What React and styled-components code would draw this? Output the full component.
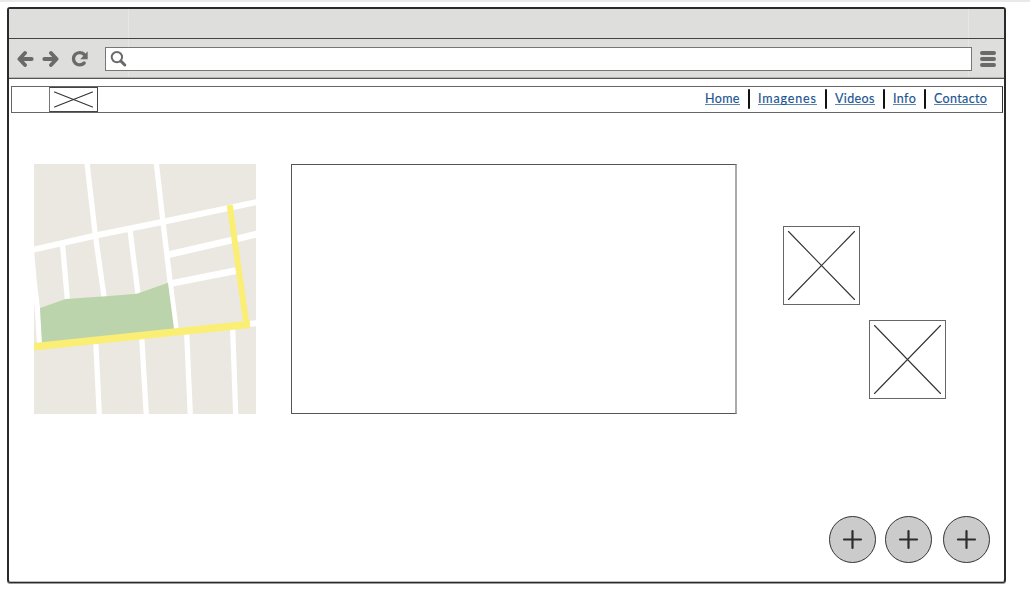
import React from "react";
import styled, { createGlobalStyle } from "styled-components";

const GlobalStyle = createGlobalStyle`
  * { box-sizing: border-box; }
  body { margin: 0; background: #fff; font-family: Lato, "Liberation Sans", sans-serif; }
  svg { display: block; }
`;

const Page = styled.div`
  height: 609px;
  padding: 5px 0 0 7px;
  border-top: 2px solid #e9e9e9;
  overflow: hidden;
`;

const BrowserWindow = styled.div`
  width: 999px;
  height: 576px;
  display: flex;
  flex-direction: column;
  border: 2px solid #2b2929;
  border-bottom-width: 1px;
  border-radius: 3px;
  box-shadow: 0 1px 0 #999, inset 0 -1px 0 #bbb;
`;

const TitleBar = styled.div`
  height: 30px;
  background: linear-gradient(#e6e6e5, #e6e6e5) 119px 0 / 1px 100% no-repeat,
    linear-gradient(#e6e6e5, #e6e6e5) 959px 0 / 1px 100% no-repeat, #dededc;
  border-bottom: 1px solid #444;
`;

const Toolbar = styled.div`
  height: 40px;
  display: flex;
  align-items: center;
  padding: 0 7px 0 8px;
  background: linear-gradient(#e6e6e5, #e6e6e5) 119px 0 / 1px 100% no-repeat,
    linear-gradient(#e6e6e5, #e6e6e5) 959px 0 / 1px 100% no-repeat, #dededc;
  border-bottom: 1px solid #555;
  box-shadow: inset 0 -1px 0 #b5b5b5;
`;

const AddressBar = styled.div`
  width: 867px;
  height: 24px;
  margin: 0 8px 0 13px;
  padding-left: 4px;
  display: flex;
  align-items: center;
  background: #fff;
  border: 1px solid #777;
`;

const NavBar = styled.header`
  height: 27px;
  margin: 7px 1px 0 2px;
  padding: 0 15px 0 37px;
  display: flex;
  align-items: center;
  justify-content: space-between;
  border: 1px solid #666;
  border-right-color: #333;
`;

const LogoBox = styled.div`
  width: 49px;
  height: 25px;
  border: 1px solid #444;
  border-left: 1px solid #777;
`;

const Links = styled.nav`
  display: flex;
  align-items: center;
  margin-bottom: 2px;
`;

const Link = styled.a`
  width: ${(p) => p.$width}px;
  height: 13px;
  color: #1a5490;
  font-size: 12.5px;
  line-height: 13px;
  letter-spacing: ${(p) => p.$spacing}px;
  white-space: nowrap;
  border-bottom: 1px solid #5a87b4;
  -webkit-text-stroke: 0.15px #1a5490;
`;

const Divider = styled.span`
  width: 2px;
  height: 20px;
  margin: 0 8px;
  border-radius: 1px;
  background: #111;
`;

const Content = styled.main`
  display: flex;
  align-items: flex-start;
  margin-top: 51px;
  padding-left: 25px;
`;

const Panel = styled.section`
  width: 446px;
  height: 250px;
  margin-left: 35px;
  border: 1px solid #555;
  border-right: 2px solid #aaa;
`;

const Gallery = styled.section`
  display: flex;
  flex-direction: column;
  gap: 15px;
  margin: 62px 0 0 46px;
`;

const Thumb = styled.div`
  width: 77px;
  height: 79px;
  margin-left: ${(p) => p.$indent}px;
  border: 1px solid #666;
`;

const Actions = styled.footer`
  display: flex;
  justify-content: flex-end;
  margin-top: auto;
  padding: 0 14px 19px 0;
`;

const RoundButton = styled.button`
  width: 47px;
  height: 47px;
  margin: 0 0 0 ${(p) => p.$gap}px;
  padding: 0;
  display: grid;
  place-items: center;
  background: #cbcbcb;
  border: 1px solid #333;
  border-radius: 50%;
`;

const Arrow = ({ flip }) => (
  <svg width="17" height="18" viewBox="0 0 17 18" fill="none" stroke="#6a6a6a" strokeWidth="3.8" strokeLinecap="round" strokeLinejoin="round">
    <g transform={flip ? "translate(17 0) scale(-1 1)" : undefined}>
      <path d="M8 3 2.4 9 8 15M3.5 9h11.2" />
    </g>
  </svg>
);

const ToolIcons = styled.div`
  display: flex;
  align-items: center;
  gap: 8px;
  width: 75px;
`;

const ReloadIcon = styled.svg`
  margin-left: 4px;
`;

const Reload = () => (
  <ReloadIcon width="18" height="18" viewBox="0 0 18 18">
    <path d="M13 4.3A6.2 6.2 0 1 0 13.2 13" fill="none" stroke="#6a6a6a" strokeWidth="3.3" strokeLinecap="round" />
    <path d="M16.7 1.3v8H9.2z" fill="#6a6a6a" />
  </ReloadIcon>
);

const SearchIcon = () => (
  <svg width="18" height="18" viewBox="0 0 18 18" fill="none" stroke="#6a6a6a">
    <circle cx="6.9" cy="7.1" r="5.2" strokeWidth="2" />
    <path d="m11.2 11.4 3.6 3.6" strokeWidth="3" strokeLinecap="round" />
  </svg>
);

const MenuIcon = () => (
  <svg width="16" height="18" viewBox="0 0 16 18" stroke="#6a6a6a" strokeWidth="4" strokeLinecap="round">
    <path d="M2 3h12M2 9h12M2 15h12" />
  </svg>
);

const Cross = ({ width, height, x, y }) => (
  <svg width={width} height={height} stroke="#333" strokeWidth="1.1" strokeLinecap="round">
    <path d={`M${x} ${y}L${width - x} ${height - y}M${width - x} ${y}L${x} ${height - y}`} />
  </svg>
);

const StreetMap = () => (
  <svg width="222" height="250" viewBox="0 0 222 250" fill="none">
    <rect width="222" height="250" fill="#ebe8e1" />
    <g stroke="#fff" strokeWidth="5.3">
      <path d="M-2 86 61.7 71.5 129.3 57.7 224 37.8" strokeWidth="6" />
      <path d="M53 -1 61.3 71 70.5 136" />
      <path d="M122.3 -1 129 58 137.7 131 142.5 168" />
      <path d="M28.3 78 33.5 137M96 66 104.5 134" />
      <path d="M-2.5 88 0 116 3.3 144 5.7 182" />
      <path d="M134 90.7 197 76.3 224 69.7M137 119.5 202 106.7" strokeWidth="6.8" />
      <path d="M212 160.3 224 159" strokeWidth="6" />
      <path d="M61.7 176 65.3 251M107.7 173 112.3 251M152.7 169 156.3 251M198.7 165 201.7 251" />
    </g>
    <path d="M6 144 31.7 135 71.7 132.3 102.7 129.7 134 118.7 140.2 166 8 179.5z" fill="#bcd4ac" />
    <g stroke="#faee75">
      <path d="M195.7 41 208.3 131 212.5 161" strokeWidth="6" />
      <path d="M-1 182.8 216 160.2" strokeWidth="7.5" />
    </g>
  </svg>
);

const links = [
  { label: "Home", width: 35, spacing: 0.35 },
  { label: "Imagenes", width: 59, spacing: 0.85 },
  { label: "Videos", width: 40, spacing: 0.35 },
  { label: "Info", width: 23, spacing: 0.4 },
  { label: "Contacto", width: 53, spacing: 0.35 },
];

export default function App() {
  return (
    <>
      <GlobalStyle />
      <Page>
        <BrowserWindow>
          <TitleBar />
          <Toolbar>
            <ToolIcons>
              <Arrow />
              <Arrow flip />
              <Reload />
            </ToolIcons>
            <AddressBar>
              <SearchIcon />
            </AddressBar>
            <MenuIcon />
          </Toolbar>
          <NavBar>
            <LogoBox>
              <Cross width={47} height={23} x={4.5} y={4} />
            </LogoBox>
            <Links>
              {links.map((l, i) => (
                <React.Fragment key={l.label}>
                  {i > 0 && <Divider />}
                  <Link $width={l.width} $spacing={l.spacing}>{l.label}</Link>
                </React.Fragment>
              ))}
            </Links>
          </NavBar>
          <Content>
            <StreetMap />
            <Panel />
            <Gallery>
              {[0, 86].map((indent) => (
                <Thumb key={indent} $indent={indent}>
                  <Cross width={75} height={77} x={4.5} y={4.5} />
                </Thumb>
              ))}
            </Gallery>
          </Content>
          <Actions>
            {[0, 9.4, 10.6].map((gap) => (
              <RoundButton key={gap} $gap={gap}>
                <svg width="21" height="21" stroke="#2d2d2d" strokeWidth="2.2" strokeLinecap="round">
                  <path d="M2 10.5h17M10.5 2v17" />
                </svg>
              </RoundButton>
            ))}
          </Actions>
        </BrowserWindow>
      </Page>
    </>
  );
}
